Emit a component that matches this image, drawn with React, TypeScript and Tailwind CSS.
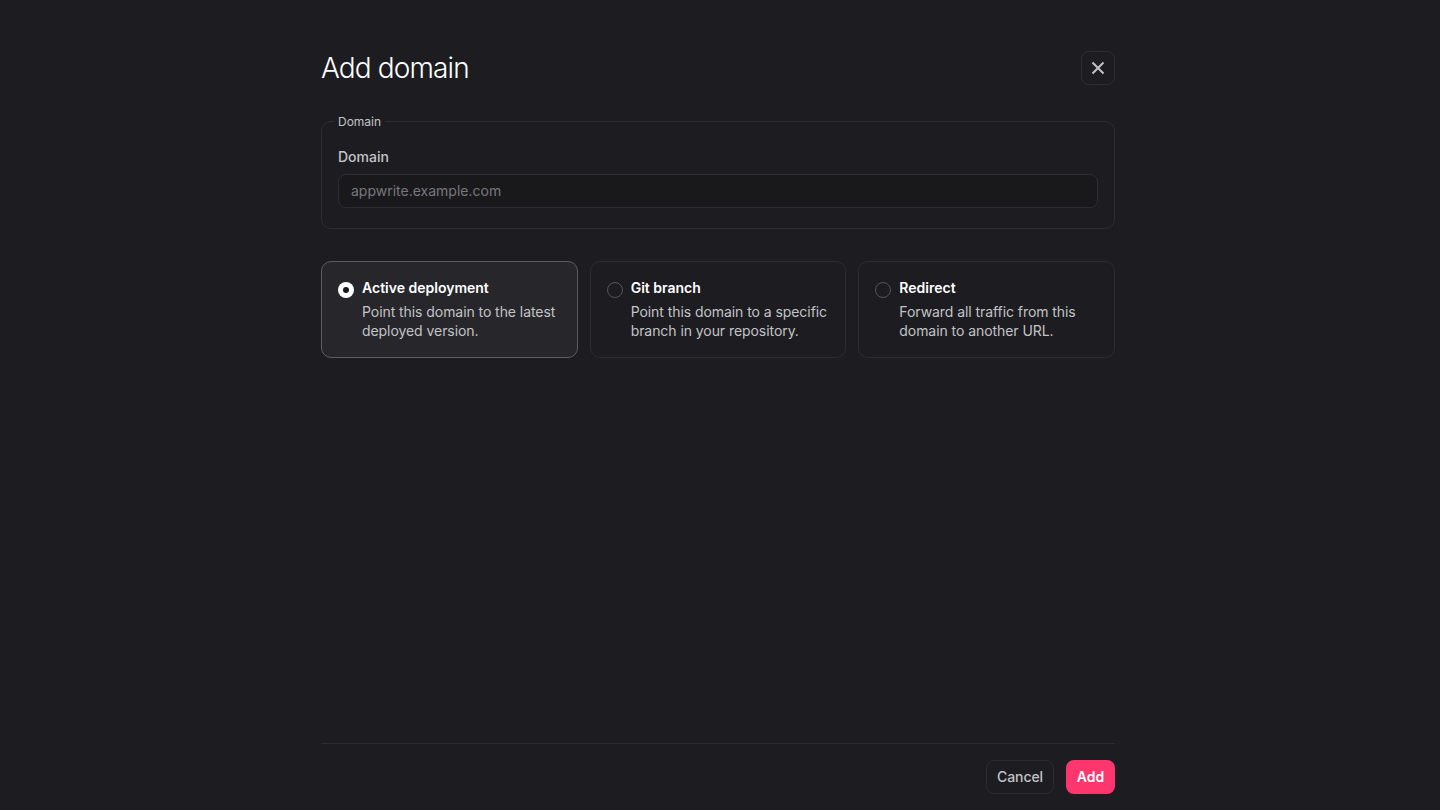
const options = [
  {
    title: "Active deployment",
    lines: ["Point this domain to the latest", "deployed version."],
    active: true,
  },
  {
    title: "Git branch",
    lines: ["Point this domain to a specific", "branch in your repository."],
    active: false,
  },
  {
    title: "Redirect",
    lines: ["Forward all traffic from this", "domain to another URL."],
    active: false,
  },
];

export default function App() {
  return (
    <div className="h-[810px] overflow-hidden bg-[#1d1d21] font-['Inter',sans-serif] text-[#c3c3c6]">
      <div className="ml-[321px] flex h-full w-[794px] flex-col">
        <header className="flex h-[34px] mt-[51px] items-center justify-between">
          <h1 className="text-[28px] font-light leading-[34px] tracking-[-0.88px] text-white">Add domain</h1>
          <button className="flex size-[34px] items-center justify-center rounded-lg border border-[#2d2d31] text-[#c3c3c6]">
            <svg width="14" height="14" viewBox="0 0 14 14" fill="none" stroke="currentColor" strokeWidth="2">
              <path d="M1.5 1.5 12.5 12.5M12.5 1.5 1.5 12.5" />
            </svg>
          </button>
        </header>

        <fieldset className="mt-[29px] h-[115px] rounded-[10px] border border-[#2d2d31] px-4">
          <legend className="ml-[-4px] px-1 pt-[2px] text-xs leading-[12px] text-[#c3c3c6]">Domain</legend>
          <label className="mt-[19px] block text-sm font-medium leading-[20px] text-[#c3c3c6]">Domain</label>
          <div className="mt-[7px] flex h-[34px] items-center rounded-lg border border-[#2d2d31] bg-[#19191c] px-3">
            <input
              placeholder="appwrite.example.com"
              className="w-full bg-transparent text-sm text-[#c3c3c6] outline-none placeholder:text-[#77777c]"
            />
          </div>
        </fieldset>

        <div className="mt-8 grid grid-cols-3 gap-3">
          {options.map((o) => (
            <div
              key={o.title}
              className={
                o.active
                  ? "flex h-[97px] gap-2 rounded-[10px] border border-[#5d5d61] bg-[#27272b] px-4 pt-4"
                  : "flex h-[97px] gap-2 rounded-[10px] border border-[#2d2d31] px-4 pt-4"
              }
            >
              {o.active ? (
                <span className="mt-[4px] flex size-4 shrink-0 items-center justify-center rounded-full bg-white">
                  <span className="size-[6px] rounded-full bg-[#19191c]" />
                </span>
              ) : (
                <span className="mt-[4px] size-4 shrink-0 rounded-full border border-[#56565a]" />
              )}
              <div>
                <p className="text-sm font-semibold leading-[20px] text-white">{o.title}</p>
                <p className="mt-[4px] text-sm leading-[19px] tracking-[-0.065px] text-[#c3c3c6]">
                  {o.lines[0]}
                  <br />
                  {o.lines[1]}
                </p>
              </div>
            </div>
          ))}
        </div>

        <footer className="mt-auto flex h-[67px] items-start justify-end gap-3 border-t border-[#2d2d31] pt-4">
          <button className="h-[34px] w-[68px] rounded-lg border border-[#2d2d31] text-sm font-medium tracking-[-0.065px] text-[#c3c3c6]">
            Cancel
          </button>
          <button className="h-[34px] w-[49px] rounded-lg bg-[#fd366e] text-sm font-semibold tracking-[-0.065px] text-white">Add</button>
        </footer>
      </div>
    </div>
  );
}
